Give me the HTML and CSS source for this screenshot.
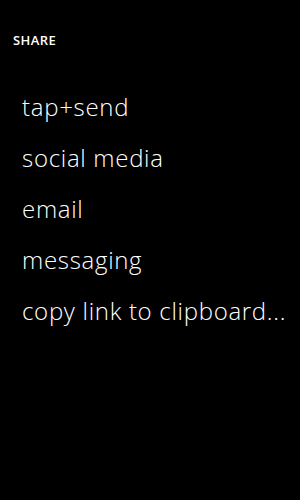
FILE: index.html
```html
<!DOCTYPE html>
<html lang="en">
<head>
  <meta charset="UTF-8">
  <meta name="viewport" content="width=device-width, initial-scale=1.0">
  <title>Share</title>
  <link rel="stylesheet" href="styles.css">
</head>
<body>
  <div class="share">
    <h1 class="title">SHARE</h1>
    <ul class="options">
      <li>tap+send</li>
      <li>social media</li>
      <li>email</li>
      <li>messaging</li>
      <li>copy link to clipboard...</li>
    </ul>
  </div>
</body>
</html>
```

FILE: styles.css
```css
body {
  margin: 0;
  background: #000;
  color: #fff;
  font-family: "Open Sans", sans-serif;
}

.share {
  padding: 30px 0 0 13px;
}

.title {
  margin: 0;
  font-size: 13px;
  font-weight: 600;
  letter-spacing: 0.4px;
  line-height: 20px;
}

.options {
  list-style: none;
  margin: 0;
  padding: 31px 0 0 9px;
}

.options li {
  font-size: 24px;
  font-weight: 300;
  letter-spacing: 0.7px;
  line-height: 51px;
  height: 51px;
}
```
